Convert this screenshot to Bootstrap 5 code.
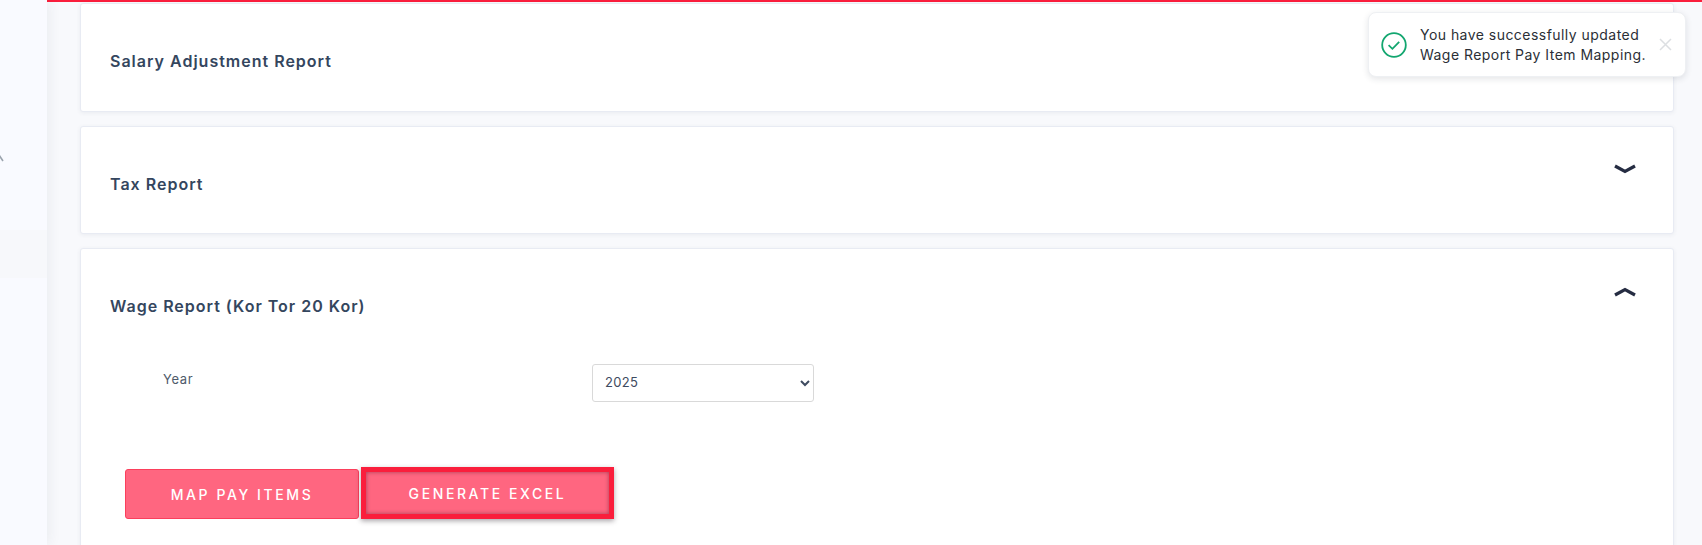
<!DOCTYPE html>
<html lang="en">
<head>
<meta charset="utf-8">
<title>Wage Report</title>
<link href="https://cdn.jsdelivr.net/npm/bootstrap@5.3.0/dist/css/bootstrap.min.css" rel="stylesheet">
<style>
html,body{height:545px;overflow:hidden;}
body{background:#f8f9fc;font-family:Inter,"Liberation Sans",sans-serif;position:relative;}
.shell{height:545px;overflow:hidden;}
.side-rail{width:47px;flex:none;background:#f9faff;box-shadow:0 0 14px rgba(40,50,80,.09);z-index:1;padding-top:155px;overflow:hidden;}
.side-tick{display:block;margin-left:-3px;}
.side-band{height:48px;background:#f7f8fb;margin-top:68px;}
.main-pane{min-width:0;}
.top-line{height:2px;background:#fa1e3c;}
.pane-body{padding:1px 28px 0 33px;}
.report-card{border:1px solid #e8ebf3;border-radius:3px;box-shadow:0 1px 4px rgba(40,50,80,.07);margin-bottom:14px;}
.report-head{height:106.5px;padding:0 29px;}
.report-title{font-size:16px;font-weight:600;letter-spacing:1px;color:#34465e;margin:0;line-height:1;padding-top:49px;}
.chev{margin-top:37px;margin-right:8.5px;}
.year-row{padding-left:82px;margin-top:8.5px;}
.year-label{width:429px;flex:none;font-size:13px;letter-spacing:.6px;color:#4f5b6b;padding-top:6px;margin:0;}
.year-select{width:222px;height:38px;font-size:13px;color:#3e4b60;border:1px solid #d9d9d9;border-radius:3px;padding:0 12px;background-image:url("data:image/svg+xml,%3csvg xmlns='http://www.w3.org/2000/svg' viewBox='0 0 10 8'%3e%3cpath fill='none' stroke='%233e4b60' stroke-width='2' d='M1 2l4 4 4-4'/%3e%3c/svg%3e");background-size:10px 8px;background-position:right 3px center;letter-spacing:.3px;}
.action-row{padding:65px 0 60px 44px;align-items:flex-end;gap:2px;}
.act-btn{font-family:Inter,"Liberation Sans",sans-serif;font-size:14px;font-weight:500;letter-spacing:2.6px;color:#fff;background:#ff6680;border:1px solid #fb3f5c;border-radius:3px;height:50px;}
.act-btn:hover{background:#ff6680;color:#fff;}
.act-map{width:234px;}
.act-gen{width:253px;height:52px;border:5px solid #fa1e3c;border-radius:0;box-shadow:inset 0 0 4px rgba(90,30,50,.55),0 2px 5px rgba(40,30,40,.4);}
.note-toast{position:absolute;left:1368px;top:12px;width:318px;height:65px;background:#fff;border:1px solid #eef0f3;border-radius:8px;box-shadow:0 2px 6px rgba(30,40,60,.12);z-index:5;padding:0 13px 0 12px;}
.note-icon{flex:none;margin-right:13px;}
.note-text{font-family:Inter,"Liberation Sans",sans-serif;font-size:14px;line-height:20px;letter-spacing:.46px;color:#2b2f36;white-space:nowrap;}
.note-close{margin-left:auto;flex:none;}
</style>
</head>
<body>
<div class="shell d-flex">
  <aside class="side-rail">
    <svg class="side-tick" width="7" height="7" viewBox="0 0 7 7"><path d="M0 6 L3 1.5 L6 6" fill="none" stroke="#9aa3ad" stroke-width="1.6"/></svg>
    <div class="side-band"></div>
  </aside>
  <main class="main-pane flex-grow-1">
    <div class="top-line"></div>
    <div class="pane-body">
      <section class="card report-card">
        <div class="report-head d-flex justify-content-between align-items-start">
          <h5 class="report-title">Salary Adjustment Report</h5>
        </div>
      </section>
      <section class="card report-card">
        <div class="report-head d-flex justify-content-between align-items-start">
          <h5 class="report-title">Tax Report</h5>
          <svg class="chev" width="22" height="11" viewBox="0 0 22 11"><path d="M1 2 L11 7.5 L21 2" fill="none" stroke="#252c42" stroke-width="3.2"/></svg>
        </div>
      </section>
      <section class="card report-card">
        <div class="report-head d-flex justify-content-between align-items-start">
          <h5 class="report-title">Wage Report (Kor Tor 20 Kor)</h5>
          <svg class="chev" width="22" height="11" viewBox="0 0 22 11"><path d="M1 9 L11 3.5 L21 9" fill="none" stroke="#252c42" stroke-width="3.2"/></svg>
        </div>
        <div class="year-row d-flex align-items-start">
          <label class="year-label" for="yr">Year</label>
          <select class="form-select year-select" id="yr"><option>2025</option></select>
        </div>
        <div class="action-row d-flex">
          <button type="button" class="btn act-btn act-map">MAP PAY ITEMS</button>
          <button type="button" class="btn act-btn act-gen">GENERATE EXCEL</button>
        </div>
      </section>
    </div>
  </main>
</div>
<div class="note-toast d-flex align-items-center">
  <svg class="note-icon" width="26" height="26" viewBox="0 0 26 26"><circle cx="13" cy="13" r="11.8" fill="none" stroke="#12a66f" stroke-width="1.8"/><path d="M7.6 13.2 L11.4 16.8 L18.2 9.8" fill="none" stroke="#12a66f" stroke-width="1.8"/></svg>
  <div class="note-text">You have successfully updated<br>Wage Report Pay Item Mapping.</div>
  <svg class="note-close" width="13" height="13" viewBox="0 0 13 13"><path d="M1 1 L12 12 M12 1 L1 12" stroke="#dcdfe2" stroke-width="1.5"/></svg>
</div>
<script src="https://cdn.jsdelivr.net/npm/bootstrap@5.3.0/dist/js/bootstrap.bundle.min.js"></script>
</body>
</html>
